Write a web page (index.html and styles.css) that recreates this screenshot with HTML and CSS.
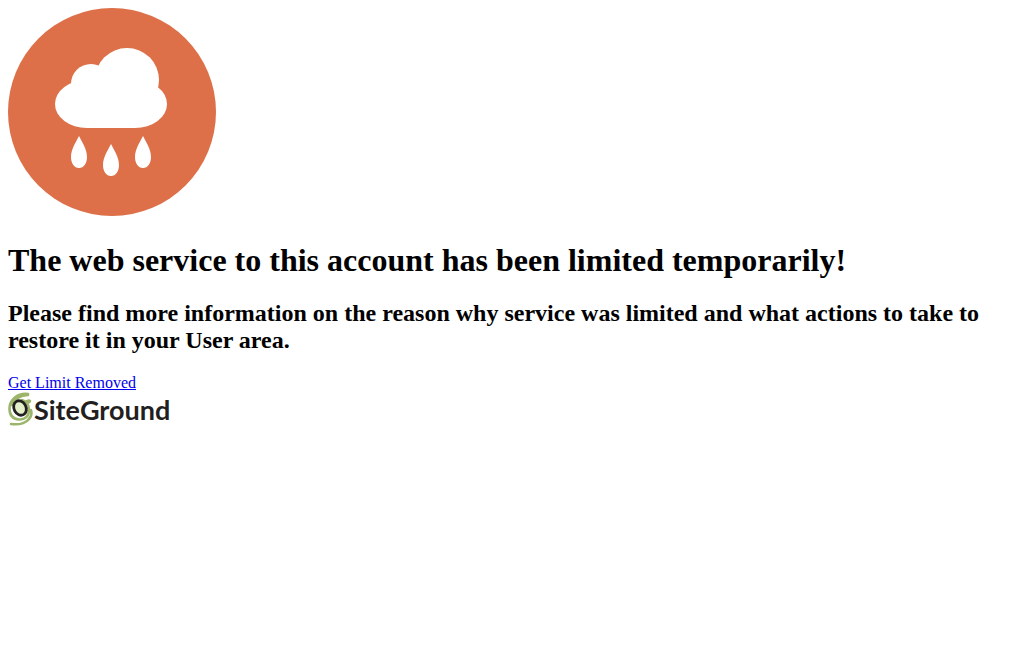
FILE: index.html
```html
<!DOCTYPE html>
<html lang="en">
<head>
<meta charset="utf-8">
<title>Service limited</title>
<link rel="stylesheet" href="styles.css">
</head>
<body>
<main>
  <div>
    <svg class="weather" viewBox="0 0 208 208" aria-hidden="true">
      <circle cx="104" cy="104" r="104" fill="#dd7048"/>
      <g fill="#fff">
        <ellipse cx="79" cy="96" rx="32" ry="24"/>
        <ellipse cx="127" cy="96" rx="32" ry="24"/>
        <circle cx="83" cy="76" r="20"/>
        <circle cx="119" cy="72" r="32"/>
        <rect x="79" y="80" width="48" height="40"/>
        <path d="M71 128c3 6 8 13 8 21c0 6-3 11-8 11s-8-5-8-11c0-8 5-15 8-21z"/>
        <path d="M103 136c3 6 8 13 8 21c0 6-3 11-8 11s-8-5-8-11c0-8 5-15 8-21z"/>
        <path d="M135 128c3 6 8 13 8 21c0 6-3 11-8 11s-8-5-8-11c0-8 5-15 8-21z"/>
      </g>
    </svg>
  </div>
  <h1>The web service to this account has been limited temporarily!</h1>
  <h2>Please find more information on the reason why service was limited and what actions to take to restore it in your User area.</h2>
  <a href="#">Get Limit Removed</a>
</main>
<footer class="brand">
  <svg class="swirl" viewBox="0 0 26 36" aria-hidden="true">
    <g fill="none" stroke-linecap="round">
      <path d="M20 2C9 1 1.500 8 1.500 16.500C1.500 23 5 27 11 27.500C17 28 21 24 21 18C21 13 18 9 14 8" stroke="#9cb56b" stroke-width="2.600"/>
      <path d="M20 3C13 3 5 7 3.500 13" stroke="#9cb56b" stroke-width="2.600"/>
      <path d="M19 9C22 8 23 9 20.500 10.500M23 18C25 25 19 34 3 32" stroke="#9cb56b" stroke-width="2.600"/>
      <ellipse cx="12" cy="16" rx="6" ry="7.500" transform="rotate(-28 12 16)" fill="#e3efc8" stroke="#231f20" stroke-width="2.800"/>
    </g>
  </svg>
  <span class="wordmark">SiteGround</span>
</footer>
</body>
</html>
```
FILE: styles.css
```css
body {
  margin: 8px;
  background: #fff;
  color: #000;
  font-family: "Liberation Serif", "Times New Roman", serif;
  font-size: 16px;
}

.weather {
  width: 208px;
  height: 208px;
}

h1 {
  margin: 22px 0 21px;
  font-size: 32px;
}

h2 {
  margin: 20px 0;
  font-size: 24px;
}

a {
  color: #00e;
}

.brand {
  display: flex;
  align-items: center;
  height: 36px;
}

.swirl {
  width: 26px;
  height: 36px;
}

.wordmark {
  color: #231f20;
  font-family: Lato, "Liberation Sans", sans-serif;
  font-size: 27px;
  font-weight: 700;
  line-height: 36px;
}
```
